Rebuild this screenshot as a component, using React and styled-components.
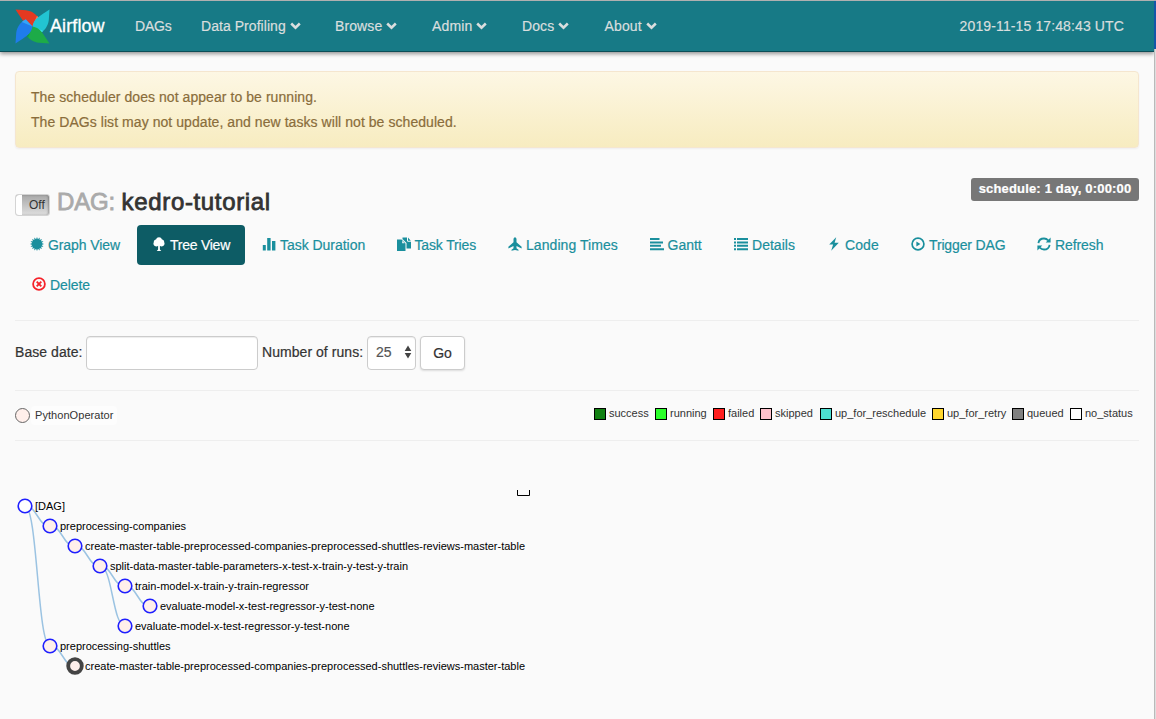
import React from 'react';
import styled, { createGlobalStyle } from 'styled-components';

const Global = createGlobalStyle`
  * { box-sizing: border-box; }
  body { margin: 0; background: #fafafa; overflow: hidden; }
  body, button, input { font-family: "Liberation Sans", Arial, sans-serif; font-size: 14px; color: #333; }
`;

const Window = styled.div`
  display: grid;
  grid-template-columns: minmax(0, 1fr) 2px;
  height: 719px;
`;
const Page = styled.div`
  background: #fafafa;
`;
const WindowEdge = styled.div`
  border-left: 1px solid #b9b9b9;
  background: #dedede;
`;
const EdgeHighlight = styled.div`
  height: 49px;
  margin-left: -1px;
  background: #1456a8;
  border-top: 1px solid #aaadb1;
`;

const Navbar = styled.nav`
  display: flex;
  align-items: center;
  height: 52px;
  padding: 0 15px;
  background: #177a86;
  border-top: 1px solid #b0b0b0;
  border-bottom: 1px solid #0b4e57;
  box-shadow: 0 2px 4px rgba(0, 0, 0, 0.4);
`;
const Brand = styled.div`
  display: flex;
  align-items: center;
  width: 105px;
  color: #fff;
  font-size: 18px;
  letter-spacing: 0.1px;
  -webkit-text-stroke: 0.3px #fff;
`;
const NavItem = styled.div`
  display: flex;
  align-items: center;
  gap: 4px;
  width: ${(p) => p.$width}px;
  padding-left: 15px;
  color: #d9dede;
  white-space: nowrap;
  letter-spacing: ${(p) => p.$track || 0}px;
  -webkit-text-stroke: 0.2px currentColor;
`;
const Clock = styled.div`
  margin-left: auto;
  margin-right: 15px;
  color: #d9dede;
  letter-spacing: 0.12px;
  -webkit-text-stroke: 0.2px currentColor;
`;

const Content = styled.main`
  padding: 19px 15px 0;
`;
const Alert = styled.div`
  height: 77px;
  padding: 13px 15px;
  border: 1px solid #f5e6cf;
  border-radius: 4px;
  background: linear-gradient(#fdf7e4, #f7ecc0);
  color: #8a6d3b;
  line-height: 25px;
  letter-spacing: 0.06px;
  -webkit-text-stroke: 0.2px currentColor;
  box-shadow: 0 1px 2px rgba(0, 0, 0, 0.05);
`;
const AlertLine = styled.div`
  white-space: nowrap;
`;
const TitleRow = styled.header`
  display: flex;
  align-items: flex-start;
  justify-content: space-between;
  height: 48px;
  margin-top: 29px;
`;
const Heading = styled.div`
  display: flex;
  align-items: center;
  height: 49px;
`;
const Toggle = styled.div`
  display: flex;
  width: 35px;
  height: 22px;
  margin: 6px 7px 0 0;
  border: 1px solid #d4d4d4;
  border-radius: 3px;
  background: linear-gradient(#a8a8a8, #dedede);
  box-shadow: inset -1px 0 2px rgba(0, 0, 0, 0.25);
  font-size: 12px;
  line-height: 21px;
  color: #333;
`;
const ToggleHandle = styled.div`
  width: 6px;
  margin-right: 7px;
  border-radius: 3px 0 0 3px;
  background: #fff;
`;
const Title = styled.h3`
  margin: 0;
  font-size: 24px;
  font-weight: 400;
  white-space: nowrap;
  color: #333;
  letter-spacing: 0.65px;
  -webkit-text-stroke: 0.8px currentColor;
`;
const TitlePrefix = styled.span`
  color: #aaa;
  letter-spacing: -0.15px;
`;
const ScheduleLabel = styled.div`
  width: 168px;
  height: 23px;
  margin-top: 1px;
  border-radius: 3px;
  background: #777;
  color: #fff;
  font-size: 13px;
  font-weight: 700;
  line-height: 22px;
  text-align: center;
  white-space: nowrap;
  letter-spacing: 0.17px;
  -webkit-text-stroke: 0.2px currentColor;
`;

const Tabs = styled.div`
  display: flex;
  flex-wrap: wrap;
`;
const Tab = styled.a`
  display: flex;
  align-items: center;
  gap: 4px;
  width: ${(p) => p.$width}px;
  height: 40px;
  margin-right: 2px;
  padding-left: ${(p) => p.$pad || 15}px;
  border-radius: 4px;
  background: ${(p) => (p.$active ? '#0d5c65' : 'transparent')};
  color: ${(p) => (p.$active ? '#fff' : '#1a8f9d')};
  white-space: nowrap;
  letter-spacing: ${(p) => p.$track || 0}px;
  -webkit-text-stroke: 0.2px currentColor;
  svg { flex: none; margin-top: -2px; color: ${(p) => p.$icon || 'inherit'}; }
`;
const Rule = styled.hr`
  margin: ${(p) => p.$top || 0}px 0 ${(p) => p.$bottom || 0}px;
  border: 0;
  border-top: 1px solid #eee;
`;

const Form = styled.form`
  display: flex;
  align-items: center;
  height: 34px;
`;
const FieldLabel = styled.label`
  width: ${(p) => p.$width}px;
  padding-bottom: 2px;
  white-space: nowrap;
  letter-spacing: 0.05px;
  -webkit-text-stroke: 0.2px currentColor;
`;
const DateInput = styled.input`
  width: 172px;
  height: 34px;
  margin-right: 4px;
  border: 1px solid #ccc;
  border-radius: 4px;
  background: #fff;
  box-shadow: inset 0 1px 1px rgba(0, 0, 0, 0.075);
`;
const SelectBox = styled.div`
  display: flex;
  align-items: center;
  justify-content: space-between;
  width: 49px;
  height: 34px;
  margin-right: 4px;
  padding: 0 3px 2px 8px;
  border: 1px solid #ccc;
  border-radius: 4px;
  background: #fff;
  color: #555;
  box-shadow: inset 0 1px 1px rgba(0, 0, 0, 0.075);
  -webkit-text-stroke: 0.2px currentColor;
`;
const GoButton = styled.button`
  width: 45px;
  height: 34px;
  padding: 0;
  border: 1px solid #ccc;
  border-radius: 4px;
  background: #fff;
  box-shadow: 0 1px 2px rgba(0, 0, 0, 0.12);
  -webkit-text-stroke: 0.2px currentColor;
`;

const LegendRow = styled.div`
  display: flex;
  justify-content: space-between;
  height: 49px;
  font-size: 11px;
`;
const OperatorKey = styled.div`
  display: flex;
  align-items: center;
  height: 49px;
`;
const OperatorDot = styled.i`
  width: 15px;
  height: 15px;
  border: 1px solid #666;
  border-radius: 50%;
  background: #ffefeb;
`;
const OperatorName = styled.span`
  width: 86px;
  height: 19px;
  margin-left: 1px;
  padding-left: 4px;
  border-radius: 4px;
  background: #fdfdfd;
  line-height: 19px;
  letter-spacing: 0.06px;
`;
const StatusKeys = styled.div`
  display: flex;
  align-items: center;
  height: 46px;
  margin-right: 6px;
`;
const StatusKey = styled.div`
  display: flex;
  align-items: center;
  gap: 3px;
  width: ${(p) => p.$width}px;
  line-height: 13px;
  white-space: nowrap;
`;
const StatusName = styled.span`
  padding-bottom: 1px;
`;
const Swatch = styled.i`
  flex: none;
  width: 12px;
  height: 12px;
  border: 1px solid #000;
  background: ${(p) => p.$color};
`;
const TreeCanvas = styled.svg`
  display: block;
  font-size: 11px;
  overflow: visible;
`;

const Pinwheel = () => (
  <svg width="35" height="35" viewBox="0 0 35 35">
    {[
      ['#e43921', '#ff7557', 0],
      ['#22c4d2', '#3be4f0', 90],
      ['#1dab48', '#0f9a3c', 180],
      ['#1f7cec', '#35a5f7', 270],
    ].map(([main, tip, angle]) => (
      <g key={angle} transform={`rotate(${angle} 17.5 17.5)`}>
        <path d="M.5.5 11 1.2C17 2 21.5 5 24.5 10.5L17.5 17.5C9.5 16.5 7 10 .5.5Z" fill={main} />
        <path d="M22 6.8C23.2 8 24.1 9.4 24.7 10.8L17.5 17.5Z" fill={tip} />
      </g>
    ))}
  </svg>
);

const Chevron = () => (
  <svg width="11" height="8" viewBox="0 0 11 8">
    <path d="M1.2 1.5 5.5 5.6 9.8 1.5" fill="none" stroke="currentColor" strokeWidth="2.6" />
  </svg>
);

const burst = Array.from({ length: 32 }, (_, i) => {
  const r = i % 2 ? 4.8 : 7;
  const a = (i * Math.PI) / 16;
  return `${7 + r * Math.sin(a)},${7 - r * Math.cos(a)}`;
}).join(' ');

const glyphs = {
  burst: <polygon points={burst} />,
  tree: (
    <path d="M7 .2C8.5.2 9.5 1 9.8 2.2 11.2 2.6 12.4 3.8 12.2 5.2 13.2 6.8 12 9.4 9.6 9.4 8.9 9.4 8.2 9.1 7.9 8.8V12.4L9.3 14H4.7L6.1 12.4V8.8C5.8 9.1 5.1 9.4 4.4 9.4 2 9.4 .8 6.8 1.8 5.2 1.6 3.8 2.8 2.6 4.2 2.2 4.5 1 5.5.2 7 .2Z" />
  ),
  bars: <path d="M.8 8h3v5.5h-3ZM5.2 1h3.4v12.5H5.2ZM10 4h3.4v9.5H10Z" />,
  copy: (
    <path d="M0 2.5H4.5L8.5 6.5V14H0ZM5.5.5H10V4L10.8 4.8H14V11.5H9.5V6L6 2.5H5.5ZM11 .6 13.8 3.7H11ZM5.2 3.8V6.2H7.6Z" fillRule="evenodd" />
  ),
  plane: (
    <path d="M7 .2C7.8.2 8.5 1.2 8.5 2.3V5.2L13.6 9.8V11.4L8.5 8.9V11.2L10.5 12.8V13.8L7 13.1 3.5 13.8V12.8L5.5 11.2V8.9L.4 11.4V9.8L5.5 5.2V2.3C5.5 1.2 6.2.2 7 .2Z" />
  ),
  gantt: <path d="M0 1h9.5v2H0ZM0 4.4h13v2H0ZM0 7.8h11v2H0ZM0 11.2h14v2H0Z" />,
  list: (
    <path d="M0 1h2v2H0ZM3 1h11v2H3ZM0 4.4h2v2H0ZM3 4.4h11v2H3ZM0 7.8h2v2H0ZM3 7.8h11v2H3ZM0 11.2h2v2H0ZM3 11.2h11v2H3Z" />
  ),
  flash: <path d="M9.2.2 2.2 7.6H6.1L4.2 13.8 11.8 5.7H7.6Z" />,
  play: (
    <>
      <circle cx="7" cy="7" r="5.9" fill="none" stroke="currentColor" strokeWidth="1.7" />
      <path d="M5.4 4.4 9.4 7 5.4 9.6Z" />
    </>
  ),
  refresh: (
    <>
      <path d="M1.4 6.2C1.8 3.4 4.2 1.5 7 1.5 8.8 1.5 10.2 2.2 11.2 3.3M12.6 7.8C12.2 10.6 9.8 12.5 7 12.5 5.2 12.5 3.8 11.8 2.8 10.7" fill="none" stroke="currentColor" strokeWidth="1.8" />
      <path d="M13.6.6V5.5H8.7ZM.4 13.4V8.5H5.3Z" />
    </>
  ),
  remove: (
    <>
      <circle cx="7" cy="7" r="5.9" fill="none" stroke="currentColor" strokeWidth="1.8" />
      <path d="M4.7 4.7 9.3 9.3M9.3 4.7 4.7 9.3" stroke="currentColor" strokeWidth="1.9" />
    </>
  ),
};

const Glyph = ({ name }) => (
  <svg width="14" height="14" viewBox="0 0 14 14" fill="currentColor">
    {glyphs[name]}
  </svg>
);

const menus = [
  ['DAGs', 66, false, -0.2],
  ['Data Profiling', 134, true, 0.05],
  ['Browse', 97, true, 0.1],
  ['Admin', 90, true, 0.15],
  ['Docs', 82.5, true, 0.1],
  ['About', 84, true, 0.15],
];

const tabs = [
  { icon: 'burst', label: 'Graph View', width: 120, track: -0.1 },
  { icon: 'tree', label: 'Tree View', width: 108, active: true, track: -0.25 },
  { icon: 'bars', label: 'Task Duration', width: 132.5, track: -0.03 },
  { icon: 'copy', label: 'Task Tries', width: 109.5, track: -0.15 },
  { icon: 'plane', label: 'Landing Times', width: 139.5, track: 0.06 },
  { icon: 'gantt', label: 'Gantt', width: 82.5 },
  { icon: 'list', label: 'Details', width: 91, track: 0.02 },
  { icon: 'flash', label: 'Code', width: 82, track: 0.1 },
  { icon: 'play', label: 'Trigger DAG', width: 124, track: -0.15 },
  { icon: 'refresh', label: 'Refresh', width: 97, track: -0.1 },
  { icon: 'remove', label: 'Delete', width: 92, pad: 17, color: '#f5222a', track: -0.1 },
];

const statuses = [
  ['success', '#128012', 61],
  ['running', '#2bff2b', 58],
  ['failed', '#ff1f1f', 47],
  ['skipped', '#ffc0cb', 60],
  ['up_for_reschedule', '#4de0d2', 112],
  ['up_for_retry', '#ffd62e', 80],
  ['queued', '#808080', 58],
  ['no_status', '#fff', 63],
];

const nodes = [
  [10, 16, '[DAG]', 30],
  [35, 36, 'preprocessing-companies', 126],
  [60, 56, 'create-master-table-preprocessed-companies-preprocessed-shuttles-reviews-master-table', 440],
  [85, 76, 'split-data-master-table-parameters-x-test-x-train-y-test-y-train', 298],
  [110, 96, 'train-model-x-train-y-train-regressor', 174],
  [135, 116, 'evaluate-model-x-test-regressor-y-test-none', 214.5],
  [110, 136, 'evaluate-model-x-test-regressor-y-test-none', 214.5],
  [35, 156, 'preprocessing-shuttles', 110.5],
  [60, 176, 'create-master-table-preprocessed-companies-preprocessed-shuttles-reviews-master-table', 440],
];
const links = [[0, 1], [1, 2], [2, 3], [3, 4], [4, 5], [3, 6], [0, 7], [7, 8]];

const linkPath = ([from, to]) => {
  const [x1, y1] = nodes[from];
  const [x2, y2] = nodes[to];
  const mid = (x1 + x2) / 2;
  return `M${x1} ${y1}C${mid} ${y1} ${mid} ${y2} ${x2} ${y2}`;
};

const Tree = () => (
  <TreeCanvas width="1124" height="200">
    {links.map((link) => (
      <path key={link.join()} d={linkPath(link)} fill="none" stroke="#9bc3e2" strokeWidth="1.5" />
    ))}
    <path d="M502.5 0V5.5H514.5V0" fill="none" stroke="#000" />
    {nodes.map(([x, y, label, length], i) => {
      const selected = i === nodes.length - 1;
      return (
        <g key={i}>
          <circle
            cx={x}
            cy={y}
            r="6.8"
            fill={i === 0 ? '#fff' : '#ffefeb'}
            stroke={selected ? '#444' : '#1f1fff'}
            strokeWidth={selected ? 3.8 : 1.6}
          />
          <text x={x + 10} y={y + 4} fill="#000" textLength={length}>{label}</text>
        </g>
      );
    })}
  </TreeCanvas>
);

export default function App() {
  return (
    <Window>
      <Global />
      <Page>
        <Navbar>
          <Brand><Pinwheel />Airflow</Brand>
          {menus.map(([label, width, caret, track]) => (
            <NavItem key={label} $width={width} $track={track}>{label}{caret && <Chevron />}</NavItem>
          ))}
          <Clock>2019-11-15 17:48:43 UTC</Clock>
        </Navbar>
        <Content>
          <Alert>
            <AlertLine>The scheduler does not appear to be running.</AlertLine>
            <AlertLine>The DAGs list may not update, and new tasks will not be scheduled.</AlertLine>
          </Alert>
          <TitleRow>
            <Heading>
              <Toggle><ToggleHandle />Off</Toggle>
              <Title><TitlePrefix>DAG: </TitlePrefix>kedro-tutorial</Title>
            </Heading>
            <ScheduleLabel>schedule: 1 day, 0:00:00</ScheduleLabel>
          </TitleRow>
          <Tabs>
            {tabs.map((t) => (
              <Tab key={t.label} $width={t.width} $active={t.active} $pad={t.pad} $icon={t.color} $track={t.track}>
                <Glyph name={t.icon} />{t.label}
              </Tab>
            ))}
          </Tabs>
          <Rule $top={15} $bottom={15} />
          <Form>
            <FieldLabel $width={71}>Base date:</FieldLabel>
            <DateInput />
            <FieldLabel $width={105}>Number of runs:</FieldLabel>
            <SelectBox>
              25
              <svg width="8" height="14" viewBox="0 0 8 14"><path d="M4 .5 7.3 6H.7ZM4 13.5.7 8H7.3Z" fill="#444" /></svg>
            </SelectBox>
            <GoButton type="button">Go</GoButton>
          </Form>
          <Rule $top={20} />
          <LegendRow>
            <OperatorKey><OperatorDot /><OperatorName>PythonOperator</OperatorName></OperatorKey>
            <StatusKeys>
              {statuses.map(([label, color, width]) => (
                <StatusKey key={label} $width={width}><Swatch $color={color} /><StatusName>{label}</StatusName></StatusKey>
              ))}
            </StatusKeys>
          </LegendRow>
          <Rule $bottom={49} />
          <Tree />
        </Content>
      </Page>
      <WindowEdge><EdgeHighlight /></WindowEdge>
    </Window>
  );
}
